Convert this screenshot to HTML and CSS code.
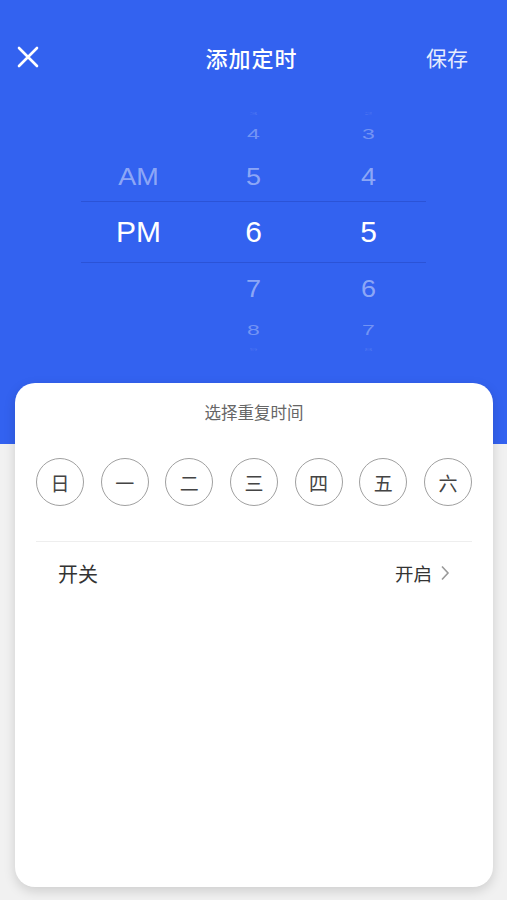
FILE: index.html
```html
<!DOCTYPE html>
<html lang="zh-CN">
<head>
    <meta charset="UTF-8">
    <meta name="viewport" content="width=device-width, initial-scale=1.0">
    <title>添加定时</title>
    <link rel="stylesheet" href="styles.css">
</head>
<body>
    <div class="header">
        <div class="close">
            <svg width="22" height="22" viewBox="0 0 22 22">
                <path d="M2 2 L20 20 M20 2 L2 20" stroke="#fff" stroke-width="2.6" stroke-linecap="round"/>
            </svg>
        </div>
        <div class="title">添加定时</div>
        <div class="save">保存</div>
    </div>

    <!-- Time picker -->
    <div class="picker">
        <div class="row r1"><span></span><span>3</span><span>2</span></div>
        <div class="row r2"><span></span><span>4</span><span>3</span></div>
        <div class="row r3 above"><span>AM</span><span>5</span><span>4</span></div>
        <div class="row selected"><span>PM</span><span>6</span><span>5</span></div>
        <div class="row r3"><span></span><span>7</span><span>6</span></div>
        <div class="row r2"><span></span><span>8</span><span>7</span></div>
        <div class="row r1"><span></span><span>9</span><span>8</span></div>
    </div>

    <div class="card">
        <div class="card-title">选择重复时间</div>
        <div class="days">
            <div class="day">日</div>
            <div class="day">一</div>
            <div class="day">二</div>
            <div class="day">三</div>
            <div class="day">四</div>
            <div class="day">五</div>
            <div class="day">六</div>
        </div>
        <div class="divider"></div>
        <div class="setting">
            <span>开关</span>
            <span class="value">开启
                <svg width="10" height="16" viewBox="0 0 10 16">
                    <path d="M2 1.5 L8 8 L2 14.5" fill="none" stroke="#999" stroke-width="1.6"/>
                </svg>
            </span>
        </div>
    </div>
</body>
</html>
```

FILE: styles.css
```css
body {
    margin: 0;
    padding: 0;
    font-family: 'Liberation Sans', 'Noto Sans CJK SC', sans-serif;
    background: linear-gradient(#3362f0 0, #3362f0 444px, #f1f1f1 444px);
    min-height: 900px;
    overflow: hidden;
}
.header {
    display: grid;
    grid-template-columns: 1fr auto 1fr;
    align-items: center;
    height: 42px;
    padding: 36px 17px 0 17px;
    color: white;
}
.close {
    display: flex;
    align-items: center;
}
.title {
    font-size: 22px;
    font-weight: 500;
    letter-spacing: 1px;
    padding-right: 4px;
}
.save {
    text-align: right;
    padding-right: 22px;
    font-size: 21px;
    color: rgba(255, 255, 255, 0.9);
}
/* Picker */
.picker {
    width: 345px;
    margin: 31px auto 0;
}
.row {
    display: grid;
    grid-template-columns: 115px 115px 115px;
    text-align: center;
    overflow: hidden;
}
.row span {
    display: block;
}
.r1 {
    height: 10px;
    line-height: 10px;
    font-size: 16px;
    color: rgba(255, 255, 255, 0.12);
}
.r1 span {
    transform: scaleY(0.25);
}
.r2 {
    height: 30px;
    line-height: 30px;
    font-size: 23px;
    color: rgba(255, 255, 255, 0.32);
}
.r2 span {
    transform: scaleY(0.6);
}
.r3 {
    height: 52px;
    line-height: 52px;
    font-size: 27px;
    color: rgba(255, 255, 255, 0.45);
}
.r3.above {
    line-height: 56px;
}
.r3 span {
    transform: scaleY(0.92);
}
.selected {
    height: 60px;
    line-height: 60px;
    font-size: 30px;
    color: white;
    border-top: 1px solid rgba(20, 40, 140, 0.25);
    border-bottom: 1px solid rgba(20, 40, 140, 0.25);
}
/* Card */
.card {
    height: 504px;
    margin: 28px 14px 0 15px;
    background: white;
    border-radius: 20px;
    box-shadow: 0 4px 12px rgba(0, 0, 0, 0.15);
    box-sizing: border-box;
    padding-top: 20px;
}
.card-title {
    text-align: center;
    font-size: 16.5px;
    line-height: 20px;
    color: #666;
}
.days {
    display: flex;
    justify-content: space-between;
    margin: 35px 21px 0;
}
.day {
    width: 46px;
    height: 46px;
    border: 1.3px solid #a0a0a0;
    border-radius: 50%;
    display: flex;
    align-items: center;
    justify-content: center;
    font-size: 19px;
    color: #444;
}
.divider {
    height: 1px;
    background: #eeeeee;
    margin: 35px 21px 0;
}
.setting {
    display: flex;
    justify-content: space-between;
    align-items: center;
    height: 62px;
    padding: 0 43px;
    font-size: 20px;
    color: #333;
}
.value {
    display: flex;
    align-items: center;
    gap: 8px;
    font-size: 18.5px;
}
```
